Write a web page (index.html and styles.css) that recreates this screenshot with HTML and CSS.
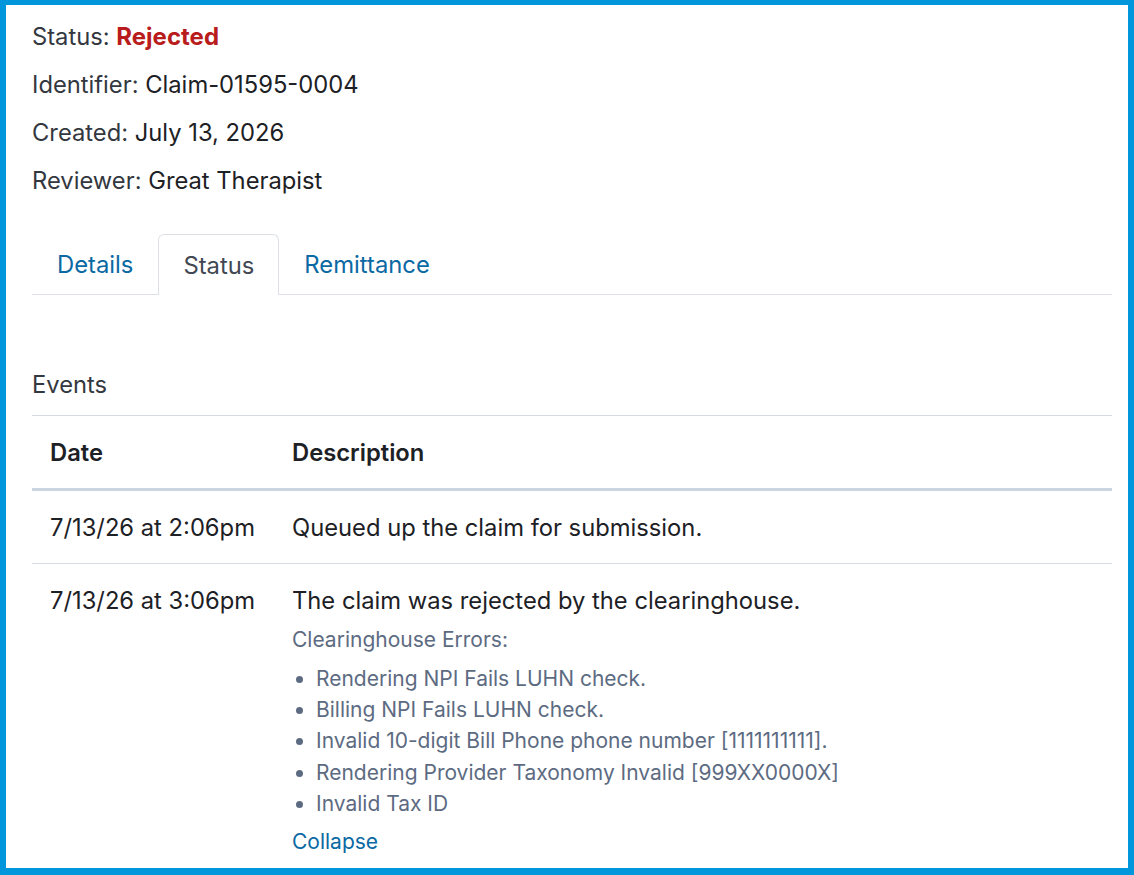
FILE: index.html
```html
<!DOCTYPE html>
<html lang="en">
<head>
<meta charset="utf-8">
<title>Claim</title>
<link rel="stylesheet" href="styles.css">
</head>
<body>
<div class="frame">
  <div class="info">
    <div class="info-line">Status: <span class="rejected">Rejected</span></div>
    <div class="info-line">Identifier: <span class="val">Claim-01595-0004</span></div>
    <div class="info-line">Created: <span class="val">July 13, 2026</span></div>
    <div class="info-line">Reviewer: <span class="val">Great Therapist</span></div>
  </div>
  <div class="tabs">
    <a class="tab">Details</a>
    <a class="tab active">Status</a>
    <a class="tab">Remittance</a>
  </div>
  <div class="section-title">Events</div>
  <table class="events">
    <thead>
      <tr><th class="col-date">Date</th><th>Description</th></tr>
    </thead>
    <tbody>
      <tr>
        <td class="col-date">7/13/26 at 2:06pm</td>
        <td>Queued up the claim for submission.</td>
      </tr>
      <tr>
        <td class="col-date">7/13/26 at 3:06pm</td>
        <td>
          <div>The claim was rejected by the clearinghouse.</div>
          <div class="err-title">Clearinghouse Errors:</div>
          <ul class="errors">
            <li>Rendering NPI Fails LUHN check.</li>
            <li>Billing NPI Fails LUHN check.</li>
            <li>Invalid 10-digit Bill Phone phone number [1111111111].</li>
            <li>Rendering Provider Taxonomy Invalid [999XX0000X]</li>
            <li>Invalid Tax ID</li>
          </ul>
          <a class="link collapse">Collapse</a>
        </td>
      </tr>
    </tbody>
  </table>
</div>
</body>
</html>
```
FILE: styles.css
```css
html, body {
  margin: 0;
  padding: 0;
  background: #ffffff;
}
body {
  font-family: Inter, "Noto Sans", sans-serif;
  font-size: 23.75px;
  color: #333840;
}
.frame {
  box-sizing: border-box;
  height: 875px;
  overflow: hidden;
  border: 6px solid #0096db;
  border-top-width: 5px;
  border-bottom-width: 7px;
  padding: 7.5px 16px 0 26px;
}
.info-line {
  line-height: 48px;
}
.val {
  color: #1d2125;
}
.rejected {
  color: #b91c1c;
  font-weight: 700;
  font-size: 24px;
}
.tabs {
  display: flex;
  margin-top: 29.5px;
  border-bottom: 1px solid #dde1e6;
  height: 60px;
}
.tab {
  display: flex;
  align-items: center;
  padding: 1px 24px 0;
  font-size: 23.8px;
  color: #0b69a3;
  border: 1px solid transparent;
  border-bottom: none;
  border-radius: 6px 6px 0 0;
  line-height: 1;
}
.tab.active {
  color: #414853;
  border-color: #dde1e6;
  background: #fff;
  margin-bottom: -1px;
}
.section-title {
  margin-top: 73px;
  line-height: 32px;
  padding-top: 0.5px;
  padding-bottom: 14.5px;
  border-bottom: 1px solid #d6dbe1;
}
.events {
  width: 100%;
  border-collapse: collapse;
  table-layout: fixed;
}
.events th {
  text-align: left;
  font-weight: 600;
  color: #1d2125;
  padding: 20.5px 18px 19.5px;
  line-height: 32px;
  border-bottom: 3px solid #cbd5e1;
}
.events td {
  vertical-align: top;
  padding: 20.5px 18px 19.5px;
  line-height: 32px;
  color: #1d2125;
  border-bottom: 1px solid #d6dbe1;
}
.events .col-date {
  width: 206px;
}
.err-title {
  margin-top: 7px;
  font-size: 21px;
  line-height: 31.3px;
  color: #5d6b82;
}
.errors {
  margin: 8px 0 0 0;
  padding-left: 24px;
  font-size: 21px;
  line-height: 31.3px;
  color: #5d6b82;
}
.link {
  color: #0b69a3;
}
.collapse {
  display: block;
  margin-top: 7px;
  font-size: 21px;
  line-height: 31.3px;
}
```
